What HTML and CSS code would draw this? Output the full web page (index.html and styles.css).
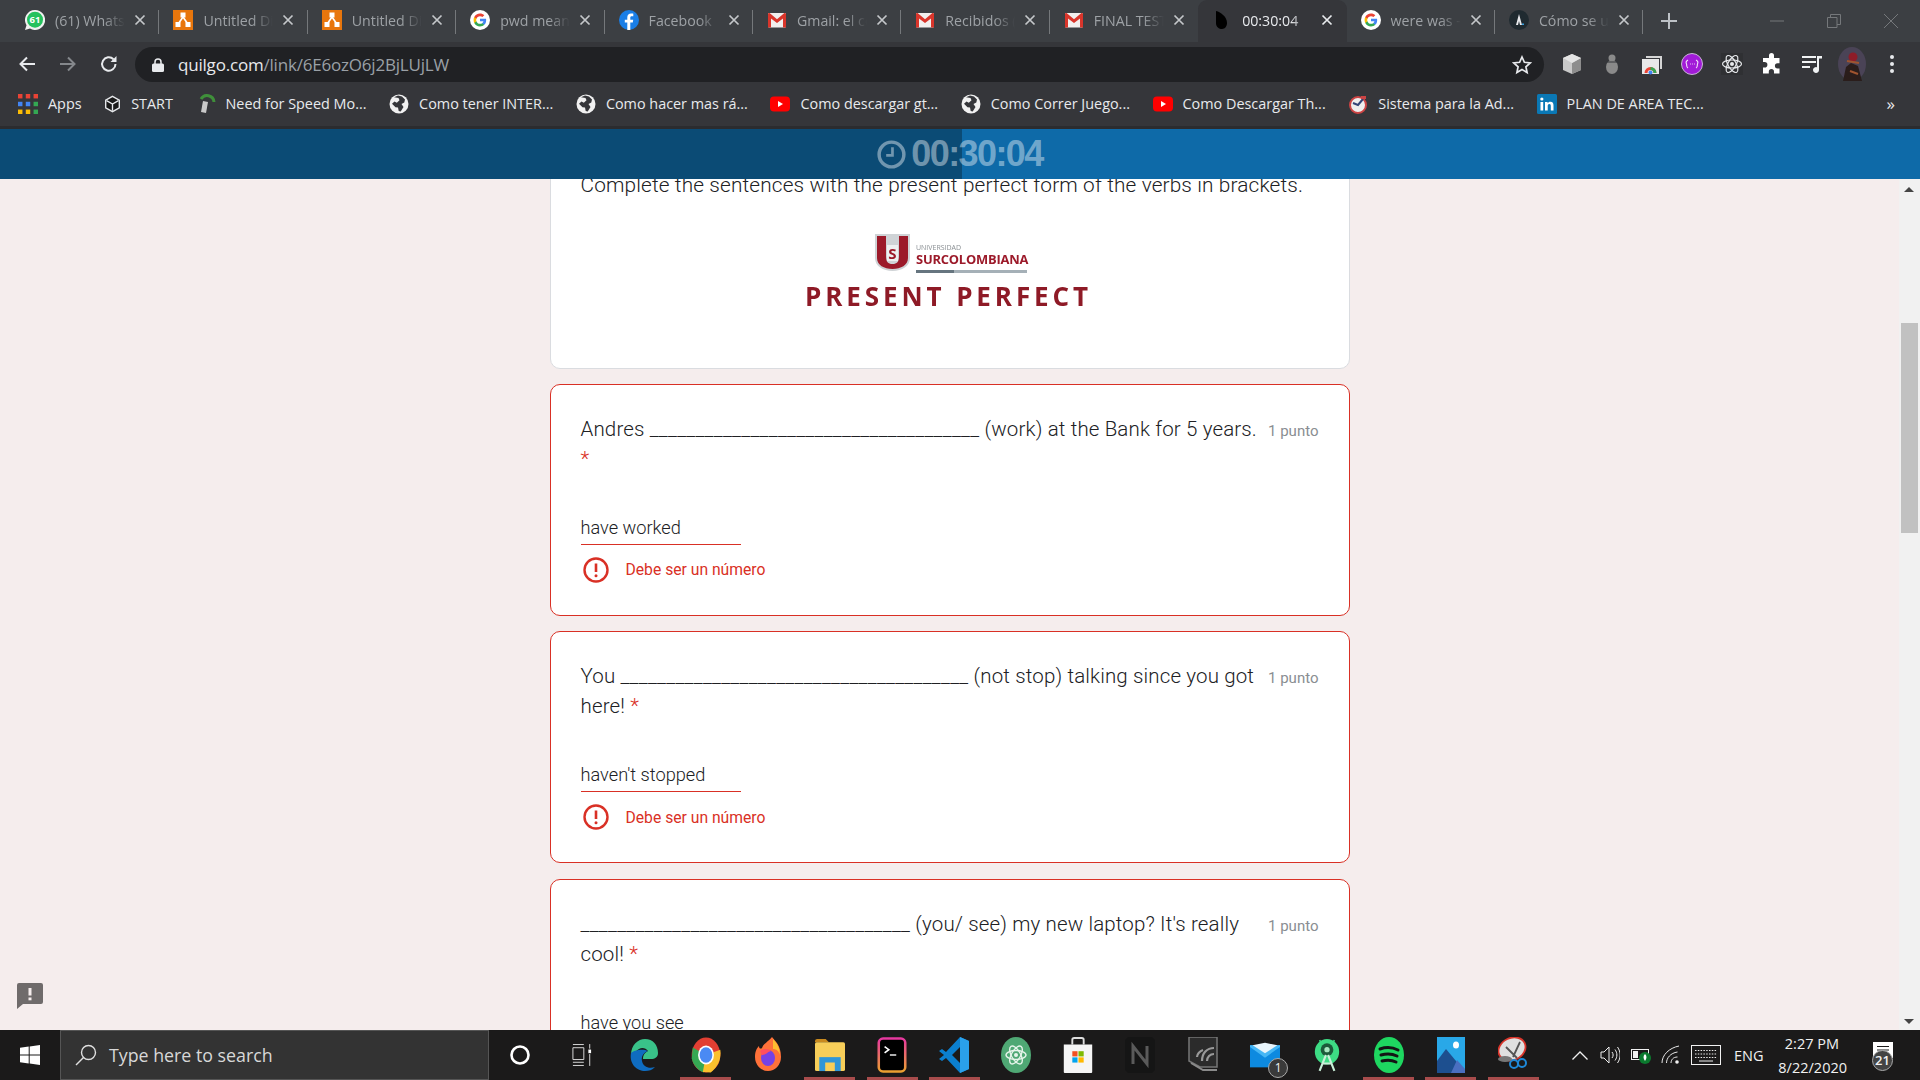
FILE: index.html
```html
<!DOCTYPE html>
<html lang="en">
<head>
  <meta charset="UTF-8">
  <meta name="viewport" content="width=device-width, initial-scale=1.0">
  <title>00:30:04</title>
  <link rel="stylesheet" href="styles.css">
</head>
<body>

  <!-- shared icons -->
  <svg class="sprites" width="0" height="0">
    <symbol id="i-close" viewBox="0 0 12 12"><path d="M1.5 1.5l9 9M10.5 1.5l-9 9" stroke="currentColor" stroke-width="1.7" fill="none"/></symbol>
    <symbol id="i-google" viewBox="0 0 24 24">
      <circle cx="12" cy="12" r="12" fill="#fff"/>
      <g transform="translate(3.6 3.6) scale(.7)">
        <path fill="#4285F4" d="M22.56 12.25c0-.78-.07-1.53-.2-2.25H12v4.26h5.92c-.26 1.37-1.04 2.53-2.21 3.31v2.77h3.57c2.08-1.92 3.28-4.74 3.28-8.09z"/>
        <path fill="#34A853" d="M12 23c2.97 0 5.46-.98 7.28-2.66l-3.57-2.77c-.98.66-2.23 1.06-3.71 1.06-2.86 0-5.29-1.93-6.16-4.53H2.18v2.84C3.99 20.53 7.7 23 12 23z"/>
        <path fill="#FBBC05" d="M5.84 14.09c-.22-.66-.35-1.36-.35-2.09s.13-1.43.35-2.09V7.07H2.18C1.43 8.55 1 10.22 1 12s.43 3.45 1.18 4.93l3.66-2.84z"/>
        <path fill="#EA4335" d="M12 5.38c1.62 0 3.06.56 4.21 1.64l3.15-3.15C17.45 2.09 14.97 1 12 1 7.7 1 3.99 3.47 2.18 7.07l3.66 2.84c.87-2.6 3.3-4.53 6.16-4.53z"/>
      </g>
    </symbol>
    <symbol id="i-gmail" viewBox="0 0 20 20">
      <rect x="1" y="3" width="18" height="14.5" rx="1" fill="#f1efee"/>
      <path d="M1 4.2V17.5h3V8.4l6 4.6 6-4.6v9.1h3V4.2c0-.9-1-1.5-1.9-.9L10 9.2 2.900 3.300C2 2.700 1 3.300 1 4.200z" fill="#d9352b"/>
    </symbol>
    <symbol id="i-diagram" viewBox="0 0 20 20">
      <rect width="20" height="20" fill="#e8760c"/>
      <path d="M10 7L5.500 13.500M10 7l4.500 6.500" stroke="#fff" stroke-width="1.600"/>
      <rect x="7.500" y="2.500" width="5" height="5" fill="#fff"/>
      <rect x="2.500" y="12" width="5" height="5" fill="#fff"/>
      <rect x="12.500" y="12" width="5" height="5" fill="#fff"/>
    </symbol>
    <symbol id="i-globe" viewBox="0 0 20 20">
      <circle cx="10" cy="10" r="9.500" fill="#f1f1f1"/>
      <path d="M5 3.200l4.500.8 1 2.200-2.700 2.600L5.500 7.500 3 9.800l3.500 3.500 2.500.2.700 3.500 2 .5 2.800-4.500-2-3 2.800-1.500L16 5.500 13 2.500 9 1.500z" fill="#35363a"/>
    </symbol>
    <symbol id="i-yt" viewBox="0 0 20 20">
      <rect y="2.500" width="20" height="15" rx="4" fill="#f00"/>
      <path d="M8 7l5 3-5 3z" fill="#fff"/>
    </symbol>
  </svg>

  <div class="tabstrip">
    <div class="tab">
      <svg class="favicon" viewBox="0 0 20 20"><path d="M10 0a10 10 0 0 0-8.500 15.200L0 20l5-1.400A10 10 0 1 0 10 0z" fill="#f1f1f1"/><circle cx="10" cy="9.700" r="8" fill="#25c15d"/><text x="10" y="13.200" class="fav-num">61</text></svg>
      <span class="tab-title">(61) WhatsApp</span>
      <svg class="tab-close"><use href="#i-close"/></svg>
    </div>
    <div class="tab">
      <svg class="favicon square"><use href="#i-diagram"/></svg>
      <span class="tab-title">Untitled Diagram</span>
      <svg class="tab-close"><use href="#i-close"/></svg>
    </div>
    <div class="tab">
      <svg class="favicon square"><use href="#i-diagram"/></svg>
      <span class="tab-title">Untitled Diagram</span>
      <svg class="tab-close"><use href="#i-close"/></svg>
    </div>
    <div class="tab">
      <svg class="favicon"><use href="#i-google"/></svg>
      <span class="tab-title">pwd meaning</span>
      <svg class="tab-close"><use href="#i-close"/></svg>
    </div>
    <div class="tab">
      <svg class="favicon" viewBox="0 0 20 20"><circle cx="10" cy="10" r="10" fill="#1a7ee6"/><path d="M8.300 20v-7.400H5.800V9.700h2.500V7.500c0-2.500 1.500-3.900 3.800-3.900 1 0 1.900.1 2.200.1v2.600h-1.500c-1.200 0-1.500.6-1.500 1.400v2h2.900l-.4 2.900h-2.500V20z" fill="#fff"/></svg>
      <span class="tab-title">Facebook</span>
      <svg class="tab-close"><use href="#i-close"/></svg>
    </div>
    <div class="tab">
      <svg class="favicon"><use href="#i-gmail"/></svg>
      <span class="tab-title">Gmail: el correo</span>
      <svg class="tab-close"><use href="#i-close"/></svg>
    </div>
    <div class="tab">
      <svg class="favicon"><use href="#i-gmail"/></svg>
      <span class="tab-title">Recibidos (25)</span>
      <svg class="tab-close"><use href="#i-close"/></svg>
    </div>
    <div class="tab before-active">
      <svg class="favicon"><use href="#i-gmail"/></svg>
      <span class="tab-title">FINAL TEST - Inglés</span>
      <svg class="tab-close"><use href="#i-close"/></svg>
    </div>
    <div class="tab active">
      <svg class="favicon" viewBox="0 0 20 20"><path d="M4 1c5 1 11 6 11 12 0 3-2 6-5 6s-6-2-6-6z" fill="#000"/></svg>
      <span class="tab-title">00:30:04</span>
      <svg class="tab-close"><use href="#i-close"/></svg>
    </div>
    <div class="tab">
      <svg class="favicon"><use href="#i-google"/></svg>
      <span class="tab-title">were was - Google</span>
      <svg class="tab-close"><use href="#i-close"/></svg>
    </div>
    <div class="tab">
      <svg class="favicon" viewBox="0 0 20 20"><circle cx="10" cy="10" r="10" fill="#1f2a30"/><path d="M10 4l3 11h-2l-1-4-1 4H7z" fill="#e8eaed"/><rect x="13" y="13.500" width="2" height="1.500" fill="#3aa0e0"/></svg>
      <span class="tab-title">Cómo se usa</span>
      <svg class="tab-close"><use href="#i-close"/></svg>
    </div>
    <svg class="new-tab" viewBox="0 0 16 16"><path d="M8 0v16M0 8h16" stroke="#bdc1c6" stroke-width="2"/></svg>
    <div class="window-controls">
      <svg viewBox="0 0 14 14"><path d="M0 7h14" stroke="#75787b"/></svg>
      <svg viewBox="0 0 14 14"><path d="M.5 3.500h9.500v10H.5zM3.500 3.500v-3h10v10H10" stroke="#75787b" fill="none"/></svg>
      <svg viewBox="0 0 14 14"><path d="M0 0l14 14M14 0L0 14" stroke="#75787b"/></svg>
    </div>
  </div>

  <div class="toolbar">
    <div class="nav-buttons">
      <svg viewBox="0 0 18 18"><path d="M17 9H2.500M9 2.500L2.500 9 9 15.500" stroke="#e8eaed" stroke-width="2" fill="none"/></svg>
      <svg viewBox="0 0 18 18"><path d="M1 9h14.500M9 2.500L15.500 9 9 15.500" stroke="#85888c" stroke-width="2" fill="none"/></svg>
      <svg viewBox="0 0 18 18"><path d="M15.500 9A6.700 6.700 0 1 1 13.500 4.200" stroke="#e8eaed" stroke-width="2" fill="none"/><path d="M16.500 1v6h-6z" fill="#e8eaed"/></svg>
    </div>
    <div class="omnibox">
      <svg class="lock" viewBox="0 0 12 14"><path d="M3 6V4a3 3 0 0 1 6 0v2" stroke="#e8eaed" stroke-width="1.500" fill="none"/><rect y="5.500" width="12" height="8.500" rx="1.500" fill="#e8eaed"/></svg>
      <span class="url"><b>quilgo.com</b>/link/6E6ozO6j2BjLUjLW</span>
      <svg class="star" viewBox="0 0 20 20"><path d="M10 2l2.400 5.300 5.800.6-4.300 3.900 1.200 5.700L10 14.600l-5.100 2.900 1.200-5.700L1.800 7.900l5.800-.6z" stroke="#e8eaed" stroke-width="1.700" fill="none"/></svg>
    </div>
    <div class="extensions">
      <svg viewBox="0 0 22 22"><path d="M11 1l9 4v12l-9 4-9-4V5z" fill="#c9c9c9"/><path d="M11 10v11l9-4V5z" fill="#8d8d8d"/><path d="M2 5l9 5 9-5-9-4z" fill="#e4e4e4"/></svg>
      <svg viewBox="0 0 22 22"><circle cx="11" cy="5" r="3.500" fill="#8a8a8a"/><ellipse cx="11" cy="14" rx="6" ry="7" fill="#8a8a8a"/><path d="M5 9h12" stroke="#35363a"/></svg>
      <svg viewBox="0 0 22 22"><path d="M5 3h16v13h-2V5H5z" fill="#d5d5d5"/><rect x="1" y="6" width="17" height="15" fill="#e8e8e8"/><path d="M3.500 20a6 6 0 0 1 12 0h-3a3 3 0 0 0-6 0z" fill="#ea4335"/><path d="M9.500 14a6 6 0 0 1 6 6h-3a3 3 0 0 0-3-3z" fill="#34a853"/><circle cx="9.500" cy="19.500" r="2" fill="#4285f4"/></svg>
      <svg viewBox="0 0 22 22"><circle cx="11" cy="11" r="10.500" fill="#a21bd8" stroke="#c9b6d6"/><path d="M7 7c-2 1-2 3-1.500 4S5 14 7 15M15 7c2 1 2 3 1.500 4s.5 3-1.500 4M9 11h.8M11 11h.8M13 11h.8" stroke="#f1e1f8" stroke-width="1.100" fill="none"/></svg>
      <svg viewBox="0 0 22 22"><rect width="22" height="22" fill="#2f3033"/><g stroke="#e8eaed" fill="none" stroke-width="1.200"><ellipse cx="11" cy="11" rx="9.500" ry="4"/><ellipse cx="11" cy="11" rx="9.500" ry="4" transform="rotate(60 11 11)"/><ellipse cx="11" cy="11" rx="9.500" ry="4" transform="rotate(120 11 11)"/></g><circle cx="11" cy="11" r="2" fill="#e8eaed"/></svg>
      <svg viewBox="0 0 22 22"><path d="M8 2.500a2.500 2.500 0 0 1 5 0V5h5.500v5.200h-2a2.600 2.600 0 0 0 0 5.200h2V20.500H13v-1.800a2.600 2.600 0 0 0-5.200 0v1.800H2v-6h1.600a2.800 2.800 0 0 0 0-5.600H2V5h6z" fill="#fff"/></svg>
      <svg viewBox="0 0 22 22"><path d="M1 4h14M1 9h14M1 14h8" stroke="#f1f3f4" stroke-width="2"/><path d="M16 3h5v2.500h-3V17a3 3 0 1 1-2-2.800z" fill="#f1f3f4"/></svg>
      <svg class="avatar" viewBox="0 0 28 34"><ellipse cx="14" cy="17" rx="14" ry="17" fill="#4a4356"/><path d="M5 34l3-14 5-4 7 3 4 15z" fill="#2a1d1b"/><circle cx="15" cy="10" r="4.500" fill="#8e1c28"/><path d="M9 14l12 2M12 24l8 3" stroke="#a0542f" stroke-width="2"/></svg>
      <svg class="dots" viewBox="0 0 4 18"><circle cx="2" cy="2" r="2" fill="#e8eaed"/><circle cx="2" cy="9" r="2" fill="#e8eaed"/><circle cx="2" cy="16" r="2" fill="#e8eaed"/></svg>
    </div>
  </div>

  <div class="bookmarks">
    <a class="bookmark">
      <svg viewBox="0 0 18 18"><g fill="#ea4335"><rect width="4" height="4"/><rect x="7" width="4" height="4"/><rect x="14" width="4" height="4"/></g><g fill="#4285f4"><rect y="7" width="4" height="4"/><rect x="7" y="7" width="4" height="4"/></g><rect x="14" y="7" width="4" height="4" fill="#34a853"/><g fill="#fbbc05"><rect y="14" width="4" height="4"/><rect x="7" y="14" width="4" height="4"/></g><rect x="14" y="14" width="4" height="4" fill="#34a853"/></svg>
      Apps
    </a>
    <a class="bookmark narrow-icon">
      <svg viewBox="0 0 20 20"><path d="M10 1l8 4.500v9L10 19l-8-4.500v-9z" fill="#1a1a1a" stroke="#e8eaed" stroke-width="1.600"/><path d="M3 6l7 4 7-4M10 10v8" stroke="#e8eaed" stroke-width="1.600" fill="none"/></svg>
      START
    </a>
    <a class="bookmark">
      <svg viewBox="0 0 20 20"><path d="M5 5a7 7 0 0 1 13 3" stroke="#3f8f3a" stroke-width="3" fill="none"/><path d="M7 7l5 1-2 11-5-1z" fill="#c9c9c9"/></svg>
      Need for Speed Mo...
    </a>
    <a class="bookmark"><svg><use href="#i-globe"/></svg>Como tener INTER...</a>
    <a class="bookmark"><svg><use href="#i-globe"/></svg>Como hacer mas rá...</a>
    <a class="bookmark"><svg><use href="#i-yt"/></svg>Como descargar gt...</a>
    <a class="bookmark"><svg><use href="#i-globe"/></svg>Como Correr Juego...</a>
    <a class="bookmark"><svg><use href="#i-yt"/></svg>Como Descargar Th...</a>
    <a class="bookmark">
      <svg viewBox="0 0 20 20"><circle cx="10" cy="11" r="8" fill="#eee" stroke="#c44" stroke-width="2"/><path d="M5 9l5 2 5-6" stroke="#347" stroke-width="2" fill="none"/><path d="M13 2h5v3h-5z" fill="#c44"/></svg>
      Sistema para la Ad...
    </a>
    <a class="bookmark">
      <svg viewBox="0 0 20 20"><rect width="20" height="20" rx="1.500" fill="#0a78b5"/><path d="M3.500 8h2.700v8.500H3.500zM8 8h2.600v1.300c.5-.9 1.500-1.500 2.800-1.500 2.400 0 3.100 1.500 3.100 3.800v4.900h-2.700v-4.400c0-1.100-.3-2-1.400-2-1.200 0-1.700.9-1.700 2v4.400H8z" fill="#fff"/><circle cx="4.850" cy="5" r="1.600" fill="#fff"/></svg>
      PLAN DE AREA TEC...
    </a>
    <span class="more">»</span>
  </div>

  <div class="timerbar">
    <svg class="timer-icon" viewBox="0 0 30 30"><circle cx="15" cy="15" r="12.800" stroke-width="3.600" fill="none"/><path d="M16 7.500V16H9.500" stroke-width="2.800" fill="none"/></svg>
    <span class="timer-text">00:30:04</span>
  </div>

  <div class="content">
    <div class="page">

      <div class="card intro">
        <p class="intro-text">Complete the sentences with the present perfect form of the verbs in brackets.</p>
        <div class="logo">
          <div class="logo-top">
            <svg class="shield" viewBox="0 0 37 39">
              <path d="M1 1h35v24c0 8-8 13-17.500 13S1 33 1 25z" fill="#cfd3d6"/>
              <path d="M3 3h9v20c0 6 2 8 6.500 8S25 29 25 23V3h9v22c0 7-7 11-15.500 11S3 32 3 25z" fill="#9c1a2a"/>
              <rect x="13" y="12" width="11" height="16" fill="#eef0f1"/>
              <text x="18.500" y="26" class="shield-letter">S</text>
            </svg>
            <div class="logo-name">
              <span class="logo-small">UNIVERSIDAD</span>
              <span class="logo-big">SURCOLOMBIANA</span>
              <span class="logo-rule"></span>
            </div>
          </div>
          <div class="logo-title">PRESENT PERFECT</div>
        </div>
      </div>

      <div class="card question">
        <div class="question-head">
          <p class="question-text">Andres <span class="blank">____________________________________</span> (work) at the Bank for 5 years. <span class="required">*</span></p>
          <span class="points">1 punto</span>
        </div>
        <div class="answer">have worked</div>
        <div class="error">
          <svg viewBox="0 0 26 26"><circle cx="13" cy="13" r="11.500" stroke="#d93025" stroke-width="2.400" fill="none"/><path d="M13 6.500v8.500" stroke="#d93025" stroke-width="2.600"/><circle cx="13" cy="18.800" r="1.500" fill="#d93025"/></svg>
          <span>Debe ser un número</span>
        </div>
      </div>

      <div class="card question">
        <div class="question-head">
          <p class="question-text">You <span class="blank">______________________________________</span> (not stop) talking since you got here! <span class="required">*</span></p>
          <span class="points">1 punto</span>
        </div>
        <div class="answer">haven't stopped</div>
        <div class="error">
          <svg viewBox="0 0 26 26"><circle cx="13" cy="13" r="11.500" stroke="#d93025" stroke-width="2.400" fill="none"/><path d="M13 6.500v8.500" stroke="#d93025" stroke-width="2.600"/><circle cx="13" cy="18.800" r="1.500" fill="#d93025"/></svg>
          <span>Debe ser un número</span>
        </div>
      </div>

      <div class="card question">
        <div class="question-head">
          <p class="question-text"><span class="blank">____________________________________</span> (you/ see) my new laptop? It's really cool! <span class="required">*</span></p>
          <span class="points">1 punto</span>
        </div>
        <div class="answer">have you see</div>
      </div>

    </div>

    <div class="scrollbar">
      <svg class="scroll-arrow" viewBox="0 0 10 5"><path d="M5 0l5 5H0z" fill="#444"/></svg>
      <div class="scroll-thumb"></div>
      <svg class="scroll-arrow bottom" viewBox="0 0 10 5"><path d="M5 5l5-5H0z" fill="#444"/></svg>
    </div>

    <svg class="feedback" viewBox="0 0 26 26"><path d="M2 0h22a2 2 0 0 1 2 2v17a2 2 0 0 1-2 2H6l-6 5V2a2 2 0 0 1 2-2z" fill="#6f6b6b"/><rect x="11.500" y="5" width="3" height="7.500" fill="#f5eded"/><rect x="11.500" y="14.500" width="3" height="2.800" fill="#f5eded"/></svg>
  </div>

  <div class="taskbar">
    <div class="start">
      <svg viewBox="0 0 20 20"><path d="M0 2.800L8.700 1.600V9.500H0zM9.700 1.500L20 0V9.500H9.700zM0 10.500h8.700v7.900L0 17.200zM9.700 10.500H20V20L9.700 18.500z" fill="#fff"/></svg>
    </div>
    <div class="searchbox">
      <svg viewBox="0 0 22 22"><circle cx="13.500" cy="8.500" r="7" stroke="#e0e0e0" stroke-width="1.400" fill="none"/><path d="M8.500 13.500L1 21" stroke="#e0e0e0" stroke-width="1.400"/></svg>
      <span>Type here to search</span>
    </div>
    <div class="task-items">
      <div class="task-item">
        <svg class="ring" viewBox="0 0 20 20"><circle cx="10" cy="10" r="8.500" stroke="#fff" stroke-width="2.600" fill="none"/></svg>
      </div>
      <div class="task-item">
        <svg class="taskview" viewBox="0 0 22 24"><path d="M1 .500h12M1 4h12M1 17h12M1 23.500h12M1 4v13M13 4v13M1 20h12" stroke="#e8e8e8" fill="none"/><rect x="18" y="6" width="3" height="4" fill="#fff"/><path d="M19.500 0v5M19.500 11v13" stroke="#e8e8e8"/></svg>
      </div>
      <div class="task-item">
        <svg viewBox="0 0 30 34"><path d="M2 17C2 7 9 1 16 1c8 0 13 6 13 14 0 4-3 6-7 6H14c0-5 3-7 5-8-2-3-6-4-9-2-5 3-7 8-8 6z" fill="#39c289"/><path d="M2 15c-2 11 6 18 14 18 4 0 7-1 10-4-6 2-12 0-13-6-1-4 1-8 6-10-6-3-15 0-17 2z" fill="#0f6cc0"/></svg>
      </div>
      <div class="task-item running">
        <svg viewBox="0 0 28 34"><ellipse cx="14" cy="17" rx="13.500" ry="16.500" fill="#e23f33"/><path d="M14 17L1.500 10 .5 20C2 27 7 32 12 33.500z" fill="#35a853"/><path d="M14 17l13.500-5c1 7-1 15-9 21.500L11 33z" fill="#fbc02d"/><ellipse cx="14" cy="17" rx="7.500" ry="9" fill="#fff"/><ellipse cx="14" cy="17" rx="6" ry="7.300" fill="#4a8af4"/></svg>
      </div>
      <div class="task-item">
        <svg viewBox="0 0 28 36"><path d="M18 0c3 4 9 8 9 20a13 14 0 0 1-26 0c0-6 2-9 4-11 0 3 2 3 3 2 1-4 6-6 10-11z" fill="#ff7139"/><path d="M19 2c3 3 7 8 7 16-1-4-4-6-7-6z" fill="#ffbd30"/><ellipse cx="14" cy="21" rx="7" ry="8" fill="#7542e5"/><path d="M6 14c4-3 9-2 11 0-4 1-5 4-9 4z" fill="#ff4f5e"/></svg>
      </div>
      <div class="task-item running">
        <svg viewBox="0 0 28 30"><path d="M0 2a2 2 0 0 1 2-2h8l3 3h-13z" fill="#c98a1e"/><rect y="3" width="28" height="27" rx="1.500" fill="#f7ce59"/><rect x="4" y="17" width="20" height="13" fill="#2f96d8"/><rect x="9.500" y="22" width="9" height="8" fill="#f7ce59"/></svg>
      </div>
      <div class="task-item running">
        <svg viewBox="0 0 28 34"><rect x="1.500" y="1.500" width="25" height="31" rx="4" fill="#000" stroke="url(#term-border)" stroke-width="2.400"/><defs><linearGradient id="term-border" x1="0" y1="0" x2="0" y2="1"><stop offset="0" stop-color="#e838a0"/><stop offset="1" stop-color="#eba030"/></linearGradient></defs><path d="M7 9l4 3-4 3" stroke="#fff" stroke-width="1.500" fill="none"/><path d="M12 17h6" stroke="#fff" stroke-width="1.300"/></svg>
      </div>
      <div class="task-item running">
        <svg viewBox="0 0 30 36"><path d="M21 0l9 4v28l-9 4L7 21l-4 3-3-2 5-4-5-4 3-2 4 3zM21 10l-8 8 8 8z" fill="#0b7fcf"/><path d="M21 0l9 4v28l-9 4z" fill="#2aa0ea"/></svg>
      </div>
      <div class="task-item">
        <svg viewBox="0 0 30 36"><ellipse cx="15" cy="18" rx="15" ry="18" fill="#4fa874"/><g stroke="#e6f4ea" stroke-width="1.400" fill="none"><ellipse cx="15" cy="18" rx="10" ry="4.500"/><ellipse cx="15" cy="18" rx="10" ry="4.500" transform="rotate(60 15 18)"/><ellipse cx="15" cy="18" rx="10" ry="4.500" transform="rotate(120 15 18)"/></g><circle cx="15" cy="18" r="2" fill="#e6f4ea"/></svg>
      </div>
      <div class="task-item">
        <svg viewBox="0 0 30 38"><path d="M9 8V3a2 2 0 0 1 2-2h8a2 2 0 0 1 2 2v5" stroke="#ddd" stroke-width="2" fill="none"/><path d="M0 8h30v29a1 1 0 0 1-1 1H1a1 1 0 0 1-1-1z" fill="#f5f5f5"/><rect x="9" y="15" width="5.500" height="5.500" fill="#f25022"/><rect x="15.500" y="15" width="5.500" height="5.500" fill="#7fba00"/><rect x="9" y="21.500" width="5.500" height="5.500" fill="#00a4ef"/><rect x="15.500" y="21.500" width="5.500" height="5.500" fill="#ffb900"/></svg>
      </div>
      <div class="task-item">
        <svg viewBox="0 0 30 36"><path d="M3 0h24l3 3v30l-3 3H3l-3-3V3z" fill="#151515"/><path d="M8 27V9l14 18V9" stroke="#5a5a5a" stroke-width="3" fill="none"/></svg>
      </div>
      <div class="task-item">
        <svg viewBox="0 0 30 36"><path d="M1 0h28v30H12L1 24z" fill="#2b2b2b" stroke="#777" stroke-width="1.500"/><path d="M3 26l12 7h14" stroke="#8a8a8a" stroke-width="2" fill="none"/><path d="M14 24c0-8 5-13 12-13M19 24c0-4 3-7 7-7M9 20c0-3 3-6 6-7" stroke="#999" stroke-width="2.200" fill="none"/></svg>
      </div>
      <div class="task-item">
        <svg viewBox="0 0 34 28"><rect y="3" width="34" height="25" fill="#0d8ae0"/><path d="M0 5l17 12L34 5V3H0z" fill="#45b6f5"/><path d="M3 3L17 0l14 3-14 9z" fill="#e8f4fb"/></svg>
        <span class="task-badge">1</span>
      </div>
      <div class="task-item">
        <svg viewBox="0 0 24 34"><path d="M5 3l3 5M19 3l-3 5" stroke="#3ddc84" stroke-width="1.500"/><ellipse cx="12" cy="14" rx="11.500" ry="12" fill="#3ddc84"/><circle cx="12" cy="12" r="6" fill="#1c5a3a"/><circle cx="12" cy="12" r="2.500" fill="#a8e6c0"/><path d="M11 17L5 32M13 17l6 15M7 25h10" stroke="#c9efd8" stroke-width="2" fill="none"/></svg>
      </div>
      <div class="task-item running">
        <svg viewBox="0 0 30 36"><ellipse cx="15" cy="18" rx="15" ry="18" fill="#1ed760"/><path d="M6 12c6-2 12-2 18 1M7 18c5-1.500 11-1.500 16 1M8 24c4-1 10-1 14 1" stroke="#141414" stroke-width="3" stroke-linecap="round" fill="none"/></svg>
      </div>
      <div class="task-item running">
        <svg viewBox="0 0 28 36"><rect width="28" height="36" fill="#29a8e8"/><path d="M0 36V24l9-12 10 12 9 12z" fill="#1d4f8f"/><path d="M14 36l6-13 8 9v4z" fill="#4a6fc0"/><ellipse cx="19" cy="8" rx="3" ry="3.500" fill="#fff"/></svg>
      </div>
      <div class="task-item running">
        <svg viewBox="0 0 30 36"><ellipse cx="14" cy="12" rx="14" ry="11" transform="rotate(-25 14 12)" fill="#e0e0e0" stroke="#d9352b" stroke-width="1.800"/><path d="M8 10l11 11M22 5L15 20" stroke="#555" stroke-width="1.800"/><circle cx="16" cy="27" r="4" stroke="#1e88d8" stroke-width="2" fill="none"/><circle cx="24" cy="26" r="4" stroke="#1e88d8" stroke-width="2" fill="none"/><ellipse cx="7" cy="22" rx="7" ry="3" fill="#777"/></svg>
      </div>
    </div>
    <div class="tray">
      <svg class="tray-chevron" viewBox="0 0 16 9"><path d="M.5 8.500L8 1l7.500 7.500" stroke="#f1f1f1" stroke-width="1.300" fill="none"/></svg>
      <svg class="tray-volume" viewBox="0 0 20 20"><path d="M1 7h3l5-5v16l-5-5H1z" stroke="#f1f1f1" fill="none"/><path d="M12 7c1.500 2 1.500 4 0 6M15 4.500c2.500 3.500 2.500 7.500 0 11M17.500 2c3.500 5 3.500 11 0 16" stroke="#f1f1f1" fill="none"/></svg>
      <svg class="tray-battery" viewBox="0 0 20 20"><rect x=".500" y="4.500" width="17" height="10" stroke="#f1f1f1" fill="#1b1a1a"/><rect x="2" y="6" width="5" height="7" fill="#f1f1f1"/><circle cx="14" cy="13" r="6" fill="#0b7a2e"/><path d="M14 9c-2 2-2 4 0 7 2-3 2-5 0-7z" fill="#fff"/></svg>
      <svg class="tray-wifi" viewBox="0 0 20 20"><path d="M1 18C1 10 8 3 18 1M5.500 18c0-5 4-10 11-11M10 18c0-3 2-6 6.500-6" stroke="#e8e8e8" fill="none"/><circle cx="16" cy="17" r="1.800" fill="#f1f1f1"/></svg>
      <svg class="tray-keyboard" viewBox="0 0 30 20"><rect x=".500" y=".500" width="29" height="19" stroke="#f1f1f1" fill="none"/><path d="M4 5.500h22M4 9h22M4 12.500h22" stroke="#e8e8e8" stroke-dasharray="1.500 1.300"/><path d="M8 16h14" stroke="#f1f1f1"/></svg>
      <span class="tray-lang">ENG</span>
      <div class="clock">
        <span>2:27 PM</span>
        <span>8/22/2020</span>
      </div>
      <div class="notify">
        <svg viewBox="0 0 20 20"><path d="M0 0h20v16H0z" fill="#fff"/><path d="M4 4.500h12M4 8h12M4 11.500h8" stroke="#1b1a1a" stroke-width="1.200"/></svg>
        <span class="notify-badge">21</span>
      </div>
    </div>
  </div>

</body>
</html>
```
FILE: styles.css
```css
* {
  box-sizing: border-box;
}

body {
  margin: 0;
  height: 100vh;
  display: flex;
  flex-direction: column;
  overflow: hidden;
  font-family: "Open Sans", sans-serif;
  background: #f5eded;
}

.sprites {
  position: absolute;
}

/* browser tabs */
.tabstrip {
  height: 42px;
  display: flex;
  align-items: flex-start;
  padding-left: 11px;
  background: #3c3f43;
  flex-shrink: 0;
}

.tab {
  width: 148.400px;
  height: 42px;
  display: flex;
  align-items: center;
  padding: 0 0 2px 14px;
  position: relative;
  color: #9ea2a6;
  font-size: 14.200px;
}

.tab::after {
  content: "";
  position: absolute;
  right: 0;
  top: 10px;
  width: 1px;
  height: 24px;
  background: #75787b;
}

.tab.active {
  background: #35363a;
  border-radius: 9px 9px 0 0;
  color: #e8eaed;
}

.tab.active::after,
.tab.before-active::after {
  display: none;
}

.favicon {
  width: 20px;
  height: 20px;
  flex-shrink: 0;
  margin-right: 10px;
}

.fav-num {
  fill: #fff;
  font-family: "Open Sans", sans-serif;
  font-size: 9.500px;
  font-weight: 700;
  text-anchor: middle;
}

.tab-title {
  width: 70px;
  white-space: nowrap;
  overflow: hidden;
  -webkit-mask-image: linear-gradient(to right, #000 70%, transparent);
  mask-image: linear-gradient(to right, #000 70%, transparent);
}

.tab-close {
  width: 12px;
  height: 12px;
  margin-left: 9px;
  flex-shrink: 0;
  color: #c4c7ca;
}

.tab.active .tab-close {
  color: #e8eaed;
}

.new-tab {
  width: 16px;
  height: 16px;
  margin: 13px 0 0 18px;
  flex-shrink: 0;
}

.window-controls {
  margin-left: auto;
  display: flex;
  gap: 43px;
  padding: 14px 22px 0 0;
}

.window-controls svg {
  width: 14px;
  height: 14px;
}

/* address bar */
.toolbar {
  height: 42px;
  display: flex;
  align-items: center;
  background: #35363a;
  flex-shrink: 0;
}

.nav-buttons {
  width: 135px;
  display: flex;
  gap: 23px;
  padding-left: 18px;
  padding-top: 2px;
}

.nav-buttons svg {
  width: 18px;
  height: 18px;
}

.omnibox {
  width: 1409px;
  height: 35px;
  display: flex;
  align-items: center;
  padding: 0 12px 0 17px;
  background: #202124;
  border-radius: 18px;
  margin-top: 3px;
}

.lock {
  width: 12px;
  height: 14px;
  margin-right: 14px;
}

.url {
  font-size: 17px;
  color: #9aa0a6;
  flex: 1;
  letter-spacing: -0.200px;
}

.url b {
  font-weight: 400;
  color: #e8eaed;
}

.star {
  width: 20px;
  height: 20px;
}

.extensions {
  display: flex;
  align-items: center;
  margin-left: 17px;
  padding-top: 2px;
  gap: 18px;
}

.extensions svg {
  width: 22px;
  height: 22px;
}

.extensions .avatar {
  width: 28px;
  height: 34px;
  margin: 0 -3px;
}

.extensions .dots {
  width: 4px;
  height: 18px;
  margin-left: 9px;
}

/* bookmarks */
.bookmarks {
  height: 45px;
  display: flex;
  align-items: center;
  gap: 22.600px;
  padding: 0 25px 3px 18px;
  background: #35363a;
  border-bottom: 3px solid #2b2c2f;
  flex-shrink: 0;
  color: #e8eaed;
  font-size: 14.400px;
}

.bookmark {
  display: flex;
  align-items: center;
  gap: 10px;
  white-space: nowrap;
}

.bookmark svg {
  width: 20px;
  height: 20px;
  flex-shrink: 0;
}

.bookmark.narrow-icon svg {
  width: 17px;
}

.more {
  margin-left: auto;
  font-size: 17px;
  line-height: 1;
}

/* quiz timer */
.timerbar {
  height: 50px;
  display: flex;
  align-items: center;
  justify-content: center;
  gap: 5px;
  flex-shrink: 0;
  background: linear-gradient(to right, #0b4b75 50.100%, #0e6aa8 50.100%);
  color: rgba(255, 255, 255, 0.42);
}

.timer-icon {
  width: 29px;
  height: 29px;
  stroke: rgba(255, 255, 255, 0.42);
}

.timer-text {
  font-family: "Liberation Sans", Arial, sans-serif;
  font-size: 36px;
  font-weight: 700;
  letter-spacing: -1.600px;
}

/* form */
.content {
  flex: 1;
  min-height: 0;
  display: flex;
  overflow: hidden;
  position: relative;
}

.page {
  flex: 1;
  display: flex;
  flex-direction: column;
  align-items: center;
  gap: 15.400px;
}

.card {
  width: 800px;
  flex-shrink: 0;
  background: #fff;
  border: 1px solid #dadce0;
  border-radius: 10px;
  padding: 0 30px;
  font-family: Roboto, sans-serif;
}

.card.intro {
  margin-top: -30px;
  height: 219.600px;
  padding-top: 20px;
}

.card.question {
  height: 232px;
  border-color: #d93025;
  padding-top: 29px;
}

.intro-text,
.question-text {
  margin: 0;
  font-weight: 300;
  letter-spacing: 0.140px;
  line-height: 30px;
  color: #202124;
}

.intro-text {
  font-size: 20.800px;
}

.question-text {
  font-size: 20.500px;
}

.blank {
  letter-spacing: 0.300px;
}

.question-head {
  display: flex;
  justify-content: space-between;
  gap: 8px;
  height: 60px;
}

.points {
  flex-shrink: 0;
  font-size: 15px;
  line-height: 30px;
  color: #8a8e92;
  padding-top: 2px;
}

.required {
  color: #d93025;
}

.answer {
  width: 160px;
  height: 32px;
  margin-top: 39px;
  line-height: 30px;
  font-size: 18.200px;
  font-weight: 300;
  color: #202124;
  border-bottom: 1px solid #d93025;
}

.error {
  display: flex;
  align-items: center;
  gap: 17px;
  margin-top: 12px;
  padding-left: 2px;
  font-size: 15.700px;
  color: #d93025;
}

.error svg {
  width: 26px;
  height: 26px;
}

/* header image, a picture in the original */
.logo {
  display: flex;
  flex-direction: column;
  align-items: center;
  margin-top: 33px;
  padding-right: 2px;
  filter: blur(0.400px);
}

.logo-top {
  display: flex;
  gap: 5px;
  margin-left: 4px;
}

.shield {
  width: 37px;
  height: 39px;
}

.shield-letter {
  fill: #9c1a2a;
  font-family: "Open Sans", sans-serif;
  font-size: 15px;
  font-weight: 700;
  text-anchor: middle;
}

.logo-name {
  display: flex;
  flex-direction: column;
  width: 111px;
  font-family: "Open Sans", sans-serif;
}

.logo-small {
  font-size: 7px;
  line-height: 9px;
  margin-top: 10px;
  color: #8a8f93;
}

.logo-big {
  font-size: 12.900px;
  line-height: 17px;
  margin-top: -1px;
  font-weight: 700;
  color: #9c1a2a;
  white-space: nowrap;
  letter-spacing: -0.200px;
}

.logo-rule {
  height: 3px;
  margin-top: 2px;
  background: linear-gradient(to right, #66757f 34%, #a5b0b7 34%);
}

.logo-title {
  margin-top: 10px;
  font-family: "Open Sans", sans-serif;
  font-size: 26px;
  line-height: 26px;
  font-weight: 700;
  letter-spacing: 3.900px;
  color: #8e1a26;
}

/* page scrollbar */
.scrollbar {
  width: 21px;
  flex-shrink: 0;
  display: flex;
  flex-direction: column;
  align-items: center;
  background: #f1f1f1;
  padding: 8px 1px 0 0;
}

.scroll-arrow {
  width: 10px;
  height: 5px;
}

.scroll-arrow.bottom {
  margin-top: auto;
  margin-bottom: 6px;
}

.scroll-thumb {
  width: 17px;
  height: 210px;
  margin-top: 131px;
  background: #c1c1c1;
}

.feedback {
  position: absolute;
  left: 17px;
  bottom: 21px;
  width: 26px;
  height: 26px;
}

/* windows taskbar */
.taskbar {
  height: 50px;
  display: flex;
  align-items: stretch;
  background: #1b1a1a;
  flex-shrink: 0;
  color: #f1f1f1;
}

.start {
  width: 60px;
  display: flex;
  align-items: center;
  justify-content: center;
}

.start svg {
  width: 20px;
  height: 20px;
}

.searchbox {
  width: 429px;
  display: flex;
  align-items: center;
  gap: 12px;
  padding-left: 14px;
  background: #333;
  border: 1px solid #555;
  color: #d8d8d8;
  font-size: 17.800px;
}

.searchbox svg {
  width: 22px;
  height: 22px;
}

.task-items {
  display: flex;
  gap: 11.100px;
  padding-left: 5px;
}

.task-item {
  width: 51px;
  display: flex;
  align-items: center;
  justify-content: center;
  position: relative;
}

.task-item svg {
  width: 30px;
  height: 36px;
}

.task-item .ring {
  width: 20px;
  height: 20px;
}

.task-item .taskview {
  width: 20px;
  height: 24px;
}

.task-item.running::after {
  content: "";
  position: absolute;
  left: 0;
  right: 0;
  bottom: 0;
  height: 3px;
  background: #a84c4c;
}

.task-badge {
  position: absolute;
  right: 2px;
  bottom: 2px;
  width: 20px;
  height: 20px;
  border: 1px solid #aaa;
  border-radius: 50%;
  background: #3a3a3a;
  font-size: 12px;
  line-height: 18px;
  text-align: center;
}

.tray {
  margin-left: auto;
  display: flex;
  align-items: center;
  padding-right: 27px;
}

.tray-chevron {
  width: 16px;
  height: 9px;
  margin-right: 12px;
}

.tray-volume {
  width: 20px;
  height: 20px;
  margin-right: 11px;
}

.tray-battery {
  width: 20px;
  height: 20px;
  margin-right: 10px;
}

.tray-wifi {
  width: 20px;
  height: 20px;
  margin-right: 10px;
}

.tray-keyboard {
  width: 30px;
  height: 20px;
  margin-right: 13px;
}

.tray-lang {
  font-size: 14.500px;
  width: 45px;
}

.clock {
  display: flex;
  flex-direction: column;
  align-items: flex-end;
  gap: 5px;
  font-size: 14.500px;
  line-height: 19px;
  width: 68px;
  text-align: center;
}

.clock span:first-child {
  margin-right: 8px;
}

.notify {
  position: relative;
  margin-left: 26px;
  width: 20px;
  height: 20px;
  margin-bottom: 6px;
}

.notify svg {
  width: 20px;
  height: 20px;
}

.notify-badge {
  position: absolute;
  left: -1px;
  top: 8px;
  width: 21px;
  height: 21px;
  border: 1px solid #aaa;
  border-radius: 50%;
  background: #444;
  font-size: 13px;
  font-weight: 600;
  line-height: 19px;
  text-align: center;
}
```
